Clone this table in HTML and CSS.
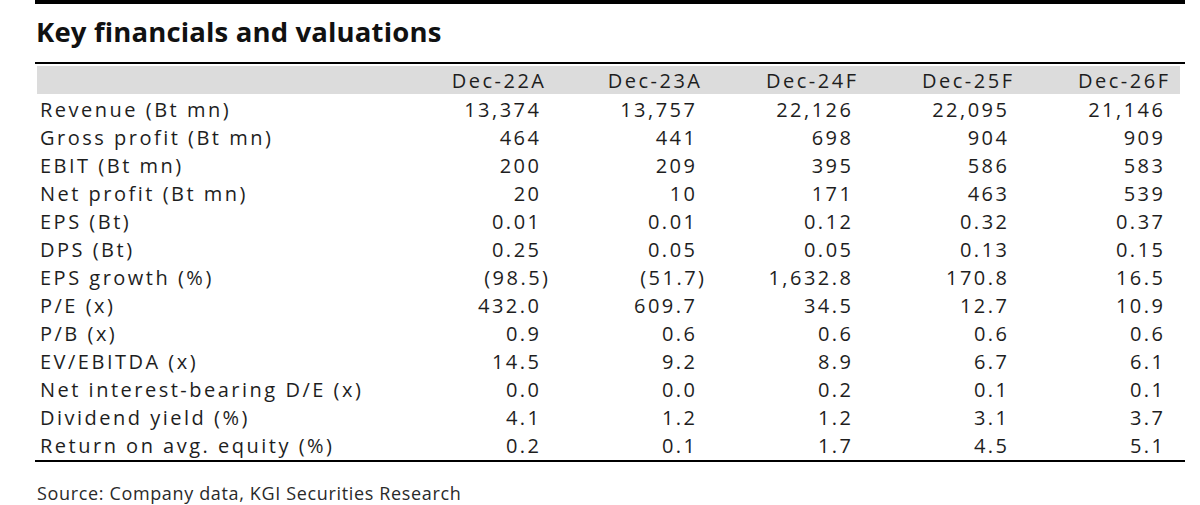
FILE: index.html
```html
<!DOCTYPE html>
<html lang="en">
<head>
<meta charset="utf-8">
<title>Key financials and valuations</title>
<link rel="stylesheet" href="styles.css">
</head>
<body>
<div class="report">
  <div class="topbar"></div>
  <h1 class="title">Key financials and valuations</h1>
  <div class="rule"></div>
  <div class="fin-table">
    <div class="row head">
      <div class="label"></div>
      <div class="num">Dec-22A</div>
      <div class="num">Dec-23A</div>
      <div class="num">Dec-24F</div>
      <div class="num">Dec-25F</div>
      <div class="num">Dec-26F</div>
    </div>
    <div class="body">
      <div class="row"><div class="label">Revenue (Bt mn)</div><div class="num">13,374</div><div class="num">13,757</div><div class="num">22,126</div><div class="num">22,095</div><div class="num">21,146</div></div>
      <div class="row"><div class="label">Gross profit (Bt mn)</div><div class="num">464</div><div class="num">441</div><div class="num">698</div><div class="num">904</div><div class="num">909</div></div>
      <div class="row"><div class="label">EBIT (Bt mn)</div><div class="num">200</div><div class="num">209</div><div class="num">395</div><div class="num">586</div><div class="num">583</div></div>
      <div class="row"><div class="label">Net profit (Bt mn)</div><div class="num">20</div><div class="num">10</div><div class="num">171</div><div class="num">463</div><div class="num">539</div></div>
      <div class="row"><div class="label">EPS (Bt)</div><div class="num">0.01</div><div class="num">0.01</div><div class="num">0.12</div><div class="num">0.32</div><div class="num">0.37</div></div>
      <div class="row"><div class="label">DPS (Bt)</div><div class="num">0.25</div><div class="num">0.05</div><div class="num">0.05</div><div class="num">0.13</div><div class="num">0.15</div></div>
      <div class="row"><div class="label">EPS growth (%)</div><div class="num neg">(98.5)</div><div class="num neg">(51.7)</div><div class="num">1,632.8</div><div class="num">170.8</div><div class="num">16.5</div></div>
      <div class="row"><div class="label">P/E (x)</div><div class="num">432.0</div><div class="num">609.7</div><div class="num">34.5</div><div class="num">12.7</div><div class="num">10.9</div></div>
      <div class="row"><div class="label">P/B (x)</div><div class="num">0.9</div><div class="num">0.6</div><div class="num">0.6</div><div class="num">0.6</div><div class="num">0.6</div></div>
      <div class="row"><div class="label">EV/EBITDA (x)</div><div class="num">14.5</div><div class="num">9.2</div><div class="num">8.9</div><div class="num">6.7</div><div class="num">6.1</div></div>
      <div class="row"><div class="label">Net interest-bearing D/E (x)</div><div class="num">0.0</div><div class="num">0.0</div><div class="num">0.2</div><div class="num">0.1</div><div class="num">0.1</div></div>
      <div class="row"><div class="label">Dividend yield (%)</div><div class="num">4.1</div><div class="num">1.2</div><div class="num">1.2</div><div class="num">3.1</div><div class="num">3.7</div></div>
      <div class="row"><div class="label">Return on avg. equity (%)</div><div class="num">0.2</div><div class="num">0.1</div><div class="num">1.7</div><div class="num">4.5</div><div class="num">5.1</div></div>
    </div>
  </div>
  <div class="rule"></div>
  <p class="source">Source: Company data, KGI Securities Research</p>
</div>
</body>
</html>
```
FILE: styles.css
```css
html, body {
  margin: 0;
  padding: 0;
  background: #ffffff;
}

.report {
  margin-left: 35px;
  width: 1150px;
  color: #1e1e1e;
  font-family: "Open Sans", "Noto Sans", sans-serif;
}

.topbar {
  height: 4px;
  background: #000000;
}

.title {
  margin: 0;
  padding: 11px 0 0 1px;
  height: 47px;
  font-size: 27.5px;
  line-height: 34px;
  font-weight: 700;
  color: #111111;
  letter-spacing: 0.15px;
}

.rule {
  height: 2px;
  background: #000000;
}

.fin-table {
  padding-top: 2px;
}

.row {
  display: grid;
  grid-template-columns: 357px repeat(5, 156px);
  height: 28px;
  align-items: center;
  font-size: 20px;
  letter-spacing: 2.5px;
}

.row.head {
  background: #dcdcdc;
  margin: 0 5px 0 2px;
  grid-template-columns: 355px repeat(5, 156px);
}

.body {
  padding-top: 1px;
  padding-bottom: 1px;
}

.label {
  padding-left: 5px;
  white-space: nowrap;
}

.num {
  text-align: right;
  padding-right: 6.5px;
  white-space: nowrap;
}

.head .num {
  padding-right: 1.5px;
}

.num.neg {
  padding-right: 0;
  margin-right: -2.5px;
}

.source {
  margin: 19px 0 0 2px;
  font-size: 18px;
  color: #2a2a2a;
  letter-spacing: 0.65px;
}
```
